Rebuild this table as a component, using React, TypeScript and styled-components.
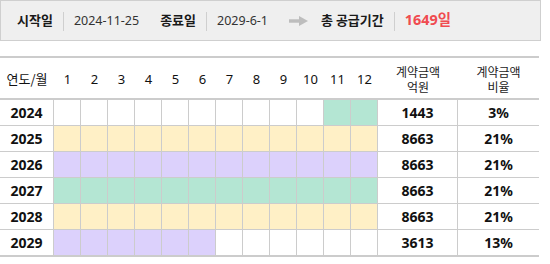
import React from "react";
import styled, { createGlobalStyle } from "styled-components";

const Global = createGlobalStyle`
  html, body { margin: 0; padding: 0; background: #fff; }
  body { font-family: "Noto Sans", "Noto Sans CJK KR", sans-serif; color: #222; }
`;

const Page = styled.div`
  width: 550px;
  display: flex;
  flex-direction: column;
  gap: 15px;
`;

const SummaryBar = styled.div`
  box-sizing: border-box;
  width: 541px;
  height: 41px;
  border: 1px solid #cfcfcf;
  background: #efefef;
  display: flex;
  align-items: center;
  padding: 0 0 2px 16px;
`;

const Label = styled.span`
  font-family: "Noto Sans CJK KR", sans-serif;
  font-weight: 700;
  font-size: 13px;
  color: #1a1a1a;
  line-height: 18px;
`;

const Sep = styled.span`
  width: 1px;
  height: 19px;
  background: #cfcfcf;
  margin: 3px 10px 0 10px;
`;

const Value = styled.span<{ $gap?: number }>`
  font-family: "Noto Sans", "Noto Sans CJK KR", sans-serif;
  font-size: 12.5px;
  color: #333;
  line-height: 18px;
  margin-top: 2px;
  margin-right: ${(p) => p.$gap ?? 0}px;
`;

const Highlight = styled.span`
  font-family: "Noto Sans", "Noto Sans CJK KR", sans-serif;
  font-weight: 700;
  font-size: 14.4px;
  color: #f04b50;
  line-height: 18px;
  margin-top: 1px;
`;

const ArrowWrap = styled.span`
  display: flex;
  margin: 3px 13px 0 0;
`;

const Grid = styled.div`
  display: grid;
  grid-template-columns: 54px repeat(12, 27px) 80px 81px;
  width: 539px;
  border-top: 2px solid #cccccc;
  border-bottom: 2px solid #cccccc;
`;

const HeadCell = styled.div<{ $cjk?: boolean }>`
  height: 42px;
  border-bottom: 2px solid #cccccc;
  display: flex;
  align-items: center;
  justify-content: center;
  text-align: center;
  font-family: ${(p) => (p.$cjk ? '"Noto Sans CJK KR", sans-serif' : '"Noto Sans", "Noto Sans CJK KR", sans-serif')};
  font-size: 13px;
  color: #111;
  padding-top: 1px;
  box-sizing: border-box;
`;

const HeadTwoLine = styled(HeadCell)`
  font-family: "Noto Sans CJK KR", sans-serif;
  font-size: 12px;
  line-height: 15px;
  color: #222;
`;

const fills: Record<string, string> = {
  y: "#fff0c6",
  p: "#dcd1fc",
  g: "#b4e6d3",
  w: "#ffffff",
};

const Cell = styled.div<{ $last?: boolean }>`
  box-sizing: border-box;
  height: ${(p) => (p.$last ? 25 : 26)}px;
  border-bottom: ${(p) => (p.$last ? "none" : "1px solid #cccccc")};
`;

const YearCell = styled(Cell)`
  border-right: 1px solid #cccccc;
  display: flex;
  align-items: center;
  justify-content: center;
  font-weight: 700;
  font-size: 14px;
  color: #111;
  padding-bottom: 1px;
`;

const MonthCell = styled(Cell)<{ $fill: string }>`
  border-right: 1px solid #cccccc;
  background: ${(p) => fills[p.$fill]};
`;

const NumCell = styled(Cell)<{ $divider?: boolean }>`
  border-right: ${(p) => (p.$divider ? "1px solid #cccccc" : "none")};
  display: flex;
  align-items: center;
  justify-content: center;
  font-weight: 700;
  font-size: 14px;
  color: #111;
  padding-bottom: 1px;
`;

type Row = { year: number; months: string; amount: number; ratio: string };

const rows: Row[] = [
  { year: 2024, months: "wwwwwwwwwwgg", amount: 1443, ratio: "3%" },
  { year: 2025, months: "yyyyyyyyyyyy", amount: 8663, ratio: "21%" },
  { year: 2026, months: "pppppppppppp", amount: 8663, ratio: "21%" },
  { year: 2027, months: "gggggggggggg", amount: 8663, ratio: "21%" },
  { year: 2028, months: "yyyyyyyyyyyy", amount: 8663, ratio: "21%" },
  { year: 2029, months: "ppppppwwwwww", amount: 3613, ratio: "13%" },
];

const Arrow = () => (
  <svg width="19" height="10" viewBox="0 0 19 10">
    <rect x="0" y="3.3" width="11" height="3.4" fill="#bdbdbd" />
    <polygon points="10,0 19,5 10,10" fill="#bdbdbd" />
  </svg>
);

export default function App() {
  return (
    <>
      <Global />
      <Page>
        <SummaryBar>
          <Label>시작일</Label>
          <Sep />
          <Value $gap={21}>2024-11-25</Value>
          <Label>종료일</Label>
          <Sep />
          <Value $gap={21}>2029-6-1</Value>
          <ArrowWrap>
            <Arrow />
          </ArrowWrap>
          <Label>총 공급기간</Label>
          <Sep />
          <Highlight>1649일</Highlight>
        </SummaryBar>
        <Grid>
          <HeadCell $cjk>연도/월</HeadCell>
          {Array.from({ length: 12 }, (_, i) => (
            <HeadCell key={i}>{i + 1}</HeadCell>
          ))}
          <HeadTwoLine>
            계약금액
            <br />
            억원
          </HeadTwoLine>
          <HeadTwoLine>
            계약금액
            <br />
            비율
          </HeadTwoLine>
          {rows.map((r, ri) => {
            const last = ri === rows.length - 1;
            return (
              <React.Fragment key={r.year}>
                <YearCell $last={last}>{r.year}</YearCell>
                {r.months.split("").map((f, mi) => (
                  <MonthCell key={mi} $fill={f} $last={last} />
                ))}
                <NumCell $divider $last={last}>
                  {r.amount}
                </NumCell>
                <NumCell $last={last}>{r.ratio}</NumCell>
              </React.Fragment>
            );
          })}
        </Grid>
      </Page>
    </>
  );
}
